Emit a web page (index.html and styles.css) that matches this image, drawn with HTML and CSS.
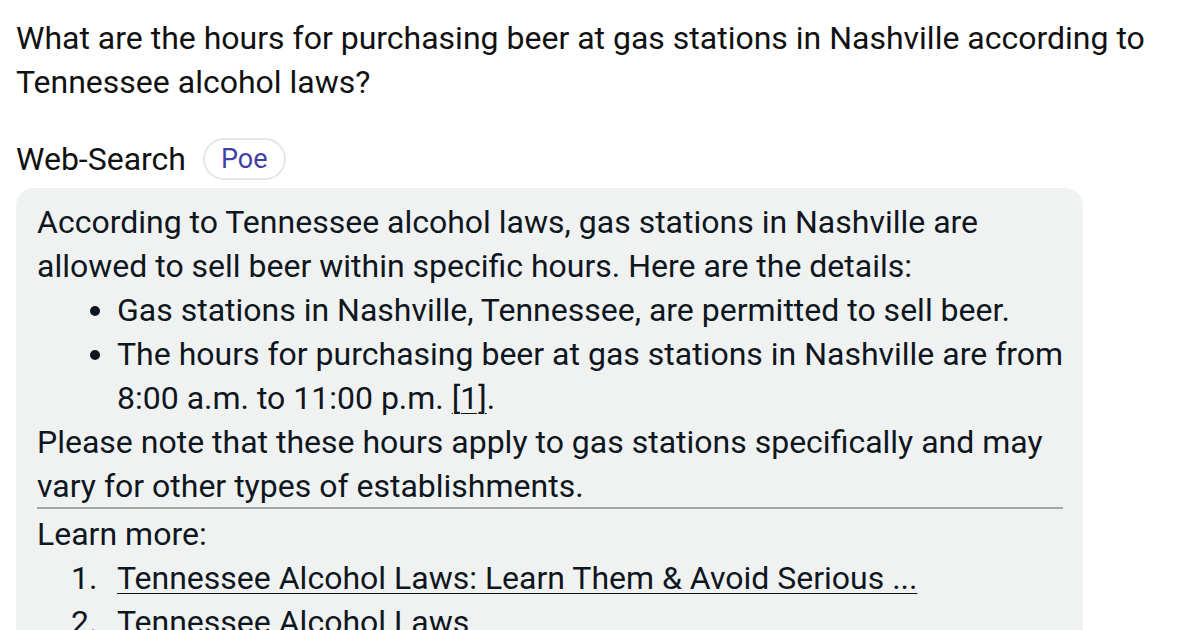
FILE: index.html
```html
<!DOCTYPE html>
<html lang="en">
<head>
<meta charset="utf-8">
<link rel="stylesheet" href="styles.css">
</head>
<body>
<main class="chat">
  <p class="question">What are the hours for purchasing beer at gas stations in Nashville according to Tennessee alcohol laws?</p>
  <div class="bot-header">
    <span class="bot-name">Web-Search</span>
    <span class="chip">Poe</span>
  </div>
  <div class="bubble">
    <p>According to Tennessee alcohol laws, gas stations in Nashville are allowed to sell beer within specific hours. Here are the details:</p>
    <ul>
      <li>Gas stations in Nashville, Tennessee, are permitted to sell beer.</li>
      <li>The hours for purchasing beer at gas stations in Nashville are from 8:00 a.m. to 11:00 p.m. <a class="cite" href="#">[1]</a>.</li>
    </ul>
    <p>Please note that these hours apply to gas stations specifically and may vary for other types of establishments.</p>
    <hr>
    <p>Learn more:</p>
    <ol>
      <li><a href="#">Tennessee Alcohol Laws: Learn Them &amp; Avoid Serious ...</a></li>
      <li><a href="#">Tennessee Alcohol Laws</a></li>
    </ol>
  </div>
</main>
</body>
</html>
```

FILE: styles.css
```css
html, body {
  margin: 0;
  padding: 0;
  background: #ffffff;
}
body {
  font-family: Roboto, "Liberation Sans", sans-serif;
  font-size: 32px;
  line-height: 44px;
  color: #000;
  overflow: hidden;
  height: 630px;
}
.chat {
  padding: 16px 16px 0 16px;
}
.question {
  margin: 0;
  color: #111;
}
.bot-header {
  display: flex;
  align-items: center;
  gap: 17px;
  margin-top: 34px;
  height: 42px;
}
.bot-name {
  color: #111;
}
.chip {
  font-size: 27px;
  line-height: 26px;
  color: #3f3fa6;
  border: 2px solid #e4e6e8;
  border-radius: 21px;
  padding: 6px 16px 6px 16px;
  background: #fff;
}
.bubble {
  margin-top: 8px;
  width: 1067px;
  box-sizing: border-box;
  background: #f0f2f2;
  border-radius: 18px;
  padding: 12px 14px 20px 21px;
  color: #0e1620;
}
.bubble p {
  margin: 0;
}
.bubble ul, .bubble ol {
  margin: 0;
  padding-left: 80px;
}
.bubble ol li::marker {
  content: counter(list-item) ".\2002\200A";
}
.bubble a {
  color: inherit;
  text-decoration: underline;
  text-underline-offset: 4px;
  text-decoration-thickness: 1px;
}
.bubble hr {
  border: none;
  border-top: 2px solid #a3a5a6;
  margin: -1px 6px 3px 0;
  height: 0;
}
```
